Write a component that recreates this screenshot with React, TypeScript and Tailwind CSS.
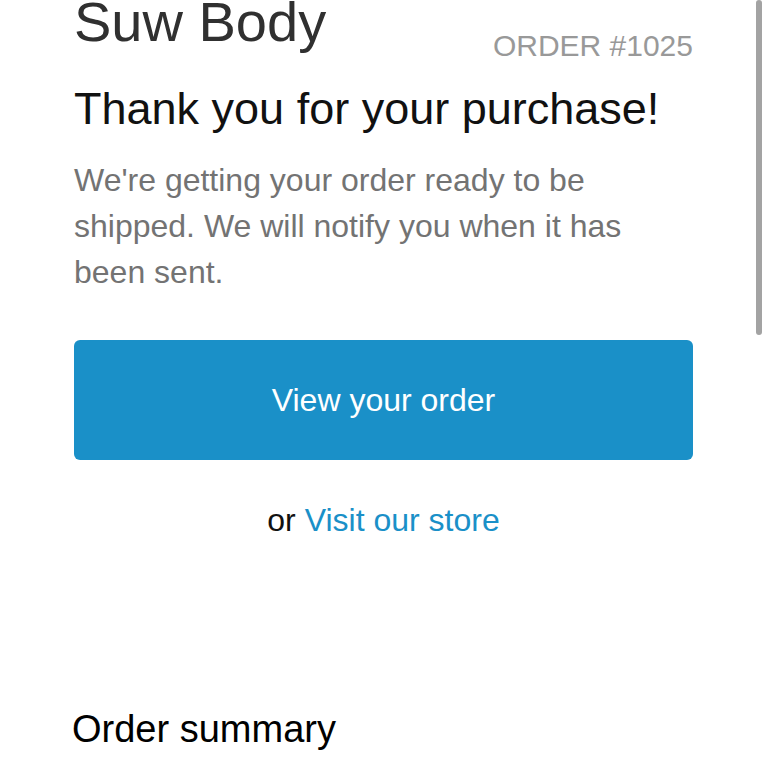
export default function App() {
  return (
    <div
      className="relative h-[768px] w-[768px] overflow-hidden bg-white"
      style={{ fontFamily: '"Liberation Sans", Arial, sans-serif' }}
    >
      <div className="pl-[74px] pr-[75px]">
        <div className="flex items-start justify-between">
          <h1 className="-mt-[6px] text-[56px] leading-none text-[#303030]">Suw Body</h1>
          <p className="mt-[31px] text-[30px] leading-none text-[#999999]">ORDER #1025</p>
        </div>

        <h2 className="mt-[25px] text-[45px] leading-none text-[#111111]">
          Thank you for your purchase!
        </h2>

        <p className="mt-[26px] text-[32px] leading-[46px] text-[#737373]">
          We're getting your order ready to be shipped. We will notify you when it has been sent.
        </p>

        <button className="mt-[45px] flex h-[120px] w-full items-center justify-center rounded-md bg-[#1a90c8] text-[32px] text-white">
          View your order
        </button>

        <p className="mt-[44px] text-center text-[32px] leading-none text-[#111111]">
          or{" "}
          <a href="#" className="text-[#1a90c8]">
            Visit our store
          </a>
        </p>

        <h3 className="-ml-[2px] mt-[174px] text-[38px] leading-none text-black">Order summary</h3>
      </div>

      <div className="absolute right-[6px] top-0 h-[335px] w-[6px] rounded-full bg-[#a3a3a3]" />
    </div>
  );
}
